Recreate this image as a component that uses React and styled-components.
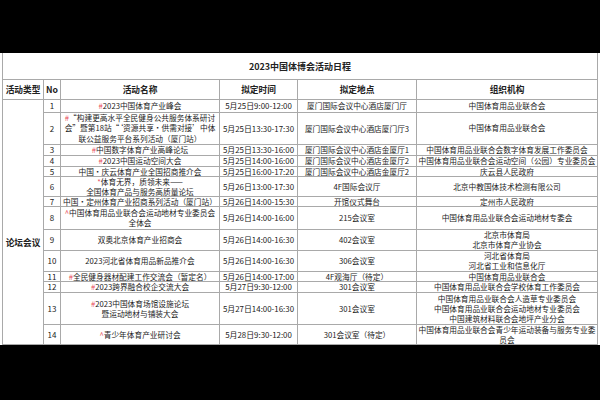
import React from "react";
import styled, { createGlobalStyle } from "styled-components";

const GlobalStyle = createGlobalStyle`
  html, body {
    margin: 0;
    padding: 0;
    background: #000;
    height: 400px;
    overflow: hidden;
  }
  body {
    font-family: "Noto Sans CJK SC", "Noto Sans", sans-serif;
  }
`;

const Screen = styled.div`
  padding-top: 53px;
  height: 400px;
  box-sizing: border-box;
`;

const Sheet = styled.div`
  background: #fff;
  height: 292px;
  overflow: hidden;
  padding: 0 2px;
`;

const line = "#a9a9a9";

const Grid = styled.div`
  display: grid;
  grid-template-columns: 41px 17px 159px 78px 119px 181px;
  grid-template-rows: 27px 20px 13px 32px 11px 11px 10px 20px 10px 23px 21px 21px 10px 11px 32px 20px;
  border-left: 1px solid ${line};
  width: max-content;
  color: #222;
`;

const Cell = styled.div`
  box-sizing: border-box;
  border-right: 1px solid ${line};
  border-bottom: 1px solid ${line};
  display: flex;
  flex-direction: column;
  justify-content: center;
  align-items: center;
  text-align: center;
  white-space: nowrap;
  font-size: ${(p) => p.$size || "7.7px"};
  line-height: ${(p) => p.$lh || "10px"};
  font-weight: ${(p) => (p.$bold ? 700 : 400)};
  overflow: visible;
`;

const TitleCell = styled(Cell)`
  grid-column: 1 / -1;
  font-size: 9px;
  font-weight: 700;
  padding-top: 1px;
`;

const HeadCell = styled(Cell)`
  font-size: 8.7px;
  font-weight: 700;
`;

const TypeCell = styled(Cell)`
  grid-row: span 14;
  font-size: 8.7px;
  font-weight: 700;
  padding-top: 42px;
`;

const Mark = styled.span`
  color: #e8505b;
`;

const events = [
  {
    no: 1,
    name: [["#", "2023中国体育产业峰会"]],
    time: "5月25日9:00-12:00",
    place: "厦门国际会议中心酒店厦门厅",
    org: ["中国体育用品业联合会"],
  },
  {
    no: 2,
    lh: "10.6px",
    name: [
      ["#", "“构建更高水平全民健身公共服务体系研讨"],
      ["", "会”暨第18站“‘资源共享·供需对接’中体"],
      ["", "联公益服务平台系列活动（厦门站）"],
    ],
    time: "5月25日13:30-17:30",
    place: "厦门国际会议中心酒店厦门厅3",
    org: ["中国体育用品业联合会"],
  },
  {
    no: 3,
    name: [["#", "中国数字体育产业高峰论坛"]],
    time: "5月25日13:30-16:00",
    place: "厦门国际会议中心酒店金厦厅1",
    org: ["中国体育用品业联合会数字体育发展工作委员会"],
  },
  {
    no: 4,
    name: [["#", "2023中国运动空间大会"]],
    time: "5月25日14:00-16:00",
    place: "厦门国际会议中心酒店金厦厅2",
    org: ["中国体育用品业联合会运动空间（公园）专业委员会"],
  },
  {
    no: 5,
    name: [["", "中国·庆云体育产业全国招商推介会"]],
    time: "5月25日16:00-17:20",
    place: "厦门国际会议中心酒店金厦厅2",
    org: ["庆云县人民政府"],
  },
  {
    no: 6,
    name: [
      ["*", "体育无界，质领未来——"],
      ["", "全国体育产品与服务高质量论坛"],
    ],
    time: "5月26日13:00-17:30",
    place: "4F国际会议厅",
    org: ["北京中教国体技术检测有限公司"],
  },
  {
    no: 7,
    name: [["", "中国·定州体育产业招商系列活动（厦门站）"]],
    time: "5月26日14:00-15:30",
    place: "开馆仪式舞台",
    org: ["定州市人民政府"],
  },
  {
    no: 8,
    name: [
      ["^", "中国体育用品业联合会运动地材专业委员会"],
      ["", "全体会"],
    ],
    time: "5月26日14:00-16:00",
    place: "215会议室",
    org: ["中国体育用品业联合会运动地材专委会"],
  },
  {
    no: 9,
    name: [["", "双奥北京体育产业招商会"]],
    time: "5月26日14:00-16:30",
    place: "402会议室",
    org: ["北京市体育局", "北京市体育产业协会"],
  },
  {
    no: 10,
    name: [["", "2023河北省体育用品新品推介会"]],
    time: "5月26日14:00-16:30",
    place: "306会议室",
    org: ["河北省体育局", "河北省工业和信息化厅"],
  },
  {
    no: 11,
    name: [["#", "全民健身器材配建工作交流会（暂定名）"]],
    time: "5月26日14:00-17:00",
    place: "4F观海厅（待定）",
    org: ["中国体育用品业联合会"],
  },
  {
    no: 12,
    name: [["#", "2023跨界融合校企交流大会"]],
    time: "5月27日9:30-12:00",
    place: "301会议室",
    org: ["中国体育用品业联合会学校体育工作委员会"],
  },
  {
    no: 13,
    name: [
      ["#", "2023中国体育场馆设施论坛"],
      ["", "暨运动地材与铺装大会"],
    ],
    time: "5月27日14:00-16:30",
    place: "301会议室",
    org: [
      "中国体育用品业联合会人造草专业委员会",
      "中国体育用品业联合会运动地材专业委员会",
      "中国建筑材料联合会地坪产业分会",
    ],
  },
  {
    no: 14,
    name: [["^", "青少年体育产业研讨会"]],
    time: "5月28日9:30-12:00",
    place: "301会议室（待定）",
    org: ["中国体育用品业联合会青少年运动装备与服务专业委", "员会"],
  },
];

const headers = ["活动类型", "No", "活动名称", "拟定时间", "拟定地点", "组织机构"];

export default function App() {
  return (
    <>
      <GlobalStyle />
      <Screen>
        <Sheet>
          <Grid>
            <TitleCell>2023中国体博会活动日程</TitleCell>
            {headers.map((h) => (
              <HeadCell key={h}>{h}</HeadCell>
            ))}
            {events.map((ev, i) => (
              <React.Fragment key={ev.no}>
                {i === 0 && <TypeCell>论坛会议</TypeCell>}
                <Cell $size="8px">{ev.no}</Cell>
                <Cell $lh={ev.lh}>
                  {ev.name.map(([mark, text], j) => (
                    <div key={j}>
                      {mark && <Mark>{mark}</Mark>}
                      {text}
                    </div>
                  ))}
                </Cell>
                <Cell $size="7.9px">{ev.time}</Cell>
                <Cell>{ev.place}</Cell>
                <Cell $lh={ev.lh}>
                  {ev.org.map((o) => (
                    <div key={o}>{o}</div>
                  ))}
                </Cell>
              </React.Fragment>
            ))}
          </Grid>
        </Sheet>
      </Screen>
    </>
  );
}
